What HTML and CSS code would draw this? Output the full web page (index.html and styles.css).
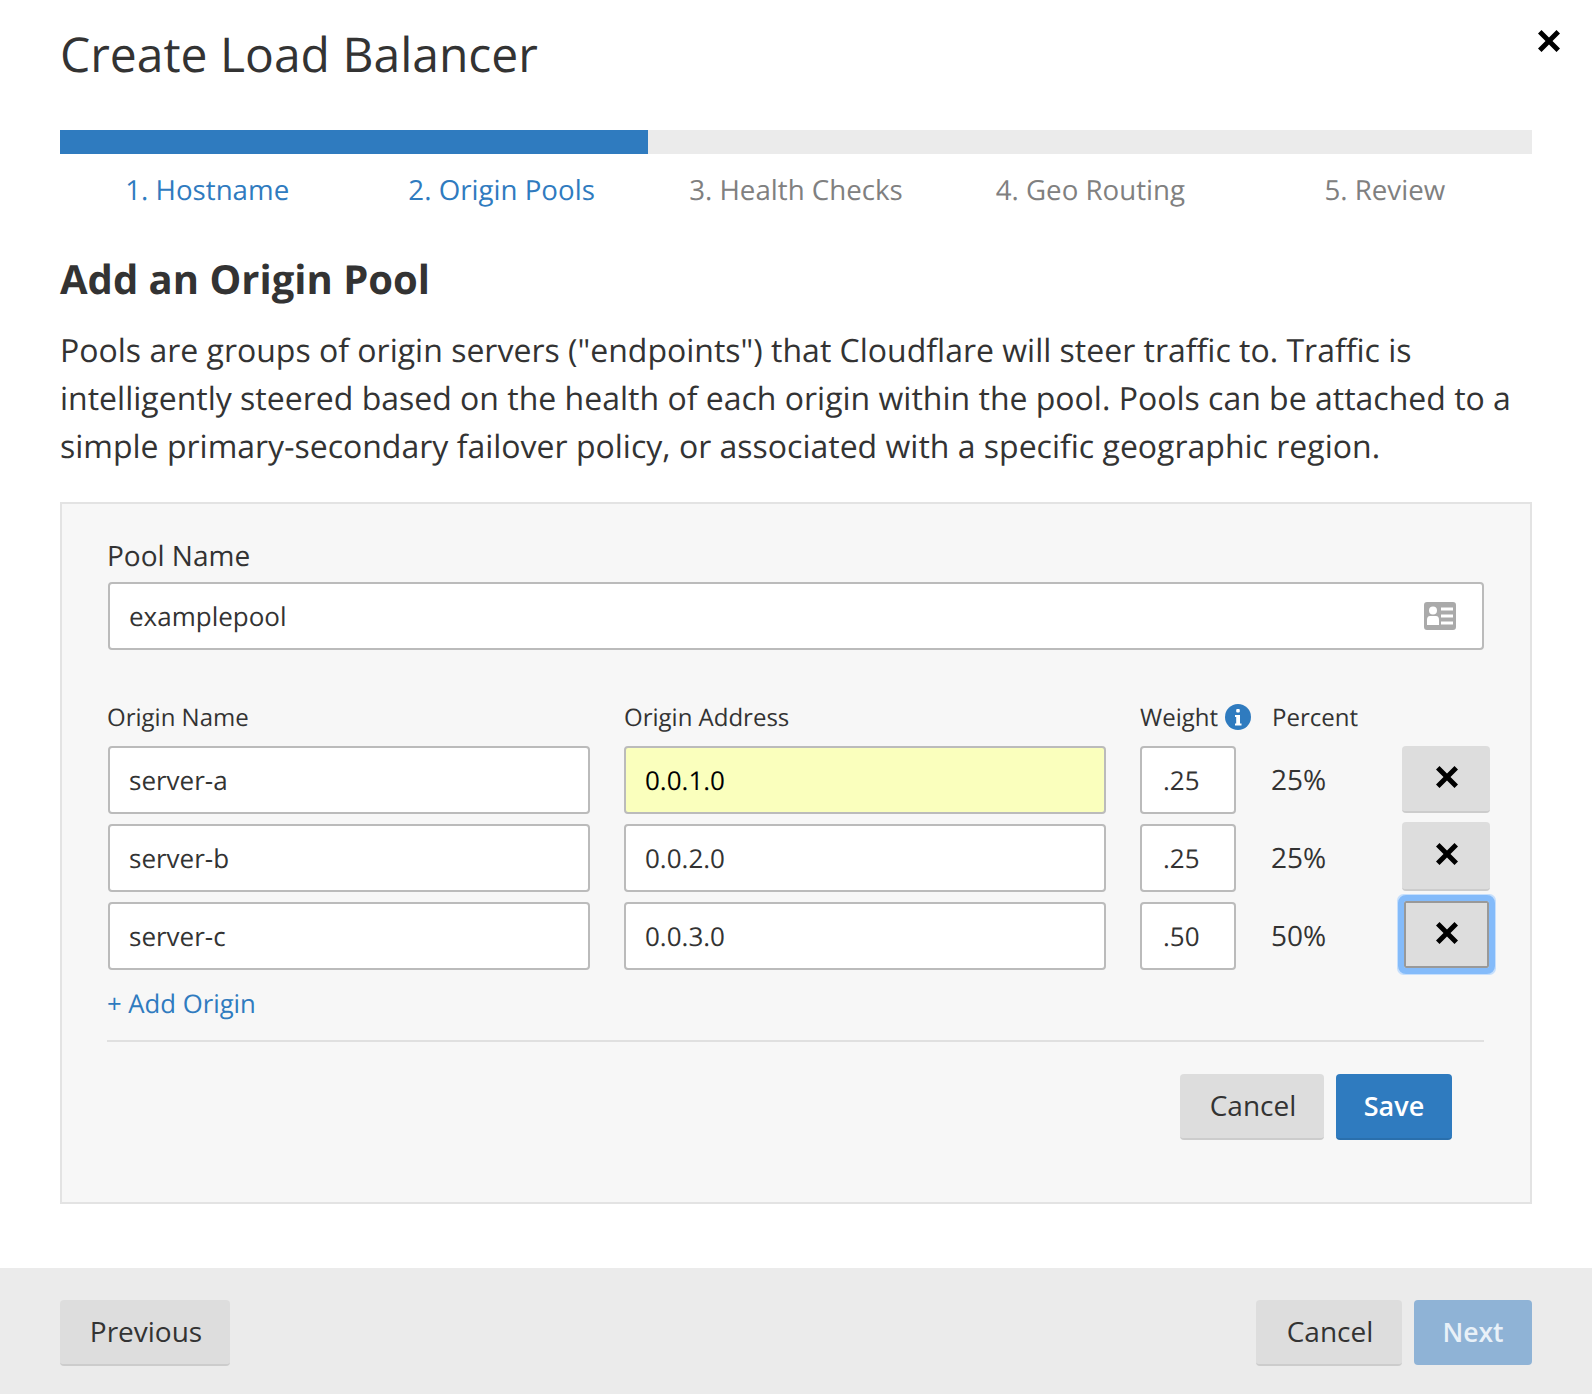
FILE: index.html
```html
<!DOCTYPE html>
<html lang="en">
  <head>
    <meta charset="UTF-8" />
    <title>Create Load Balancer</title>
    <link rel="stylesheet" href="styles.css">
  </head>
  <body>
    <div class="modal">
      <svg class="close-icon" viewBox="0 0 24 24"><path d="M4.5 1L12 8.5L19.5 1L23 4.5L15.5 12L23 19.5L19.5 23L12 15.5L4.5 23L1 19.5L8.5 12L1 4.5Z" /></svg>

      <main class="content">
        <h1>Create Load Balancer</h1>

        <div class="progress"><div class="progress-fill"></div></div>
        <ol class="steps">
          <li class="done">1. Hostname</li>
          <li class="done">2. Origin Pools</li>
          <li>3. Health Checks</li>
          <li>4. Geo Routing</li>
          <li>5. Review</li>
        </ol>

        <h2>Add an Origin Pool</h2>
        <p class="intro">Pools are groups of origin servers ("endpoints") that Cloudflare will steer traffic to. Traffic is intelligently steered based on the health of each origin within the pool. Pools can be attached to a simple primary-secondary failover policy, or associated with a specific geographic region.</p>

        <section class="pool-box">
          <div class="pool-label">Pool Name</div>
          <div class="field pool-field">
            <span>examplepool</span>
            <svg class="card-icon" viewBox="0 0 32 28">
              <path fill-rule="evenodd" d="M3 0H29A3 3 0 0 1 32 3V25A3 3 0 0 1 29 28H3A3 3 0 0 1 0 25V3A3 3 0 0 1 3 0ZM9 4.5A4 4 0 1 0 9 12.5A4 4 0 1 0 9 4.5ZM3 23H15V18Q15 14 12 14H6Q3 14 3 18ZM17 5.5V8.5H29V5.5ZM17 12.5V15.5H29V12.5ZM17 19.5V22.5H29V19.5Z" />
            </svg>
          </div>

          <div class="origin-grid origin-head">
            <div>Origin Name</div>
            <div>Origin Address</div>
            <div class="weight-head">Weight
              <svg class="info-icon" viewBox="0 0 26 26">
                <circle cx="13" cy="13" r="13" />
                <rect class="info-mark" x="11.2" y="5" width="3.6" height="3.6" rx="1" />
                <path class="info-mark" d="M10 11H15V19.5H16.5V21.5H10V19.5H11.2V13H10Z" />
              </svg>
            </div>
            <div class="percent">Percent</div>
            <div></div>
          </div>

          <div class="origin-grid origin-row">
            <div class="field">server-a</div>
            <div class="field autofilled">0.0.1.0</div>
            <div class="field weight-field">.25</div>
            <div class="percent">25%</div>
            <button class="btn remove" type="button"><svg class="x-icon" viewBox="0 0 24 24"><path d="M4.5 1L12 8.5L19.5 1L23 4.5L15.5 12L23 19.5L19.5 23L12 15.5L4.5 23L1 19.5L8.5 12L1 4.5Z" /></svg></button>
          </div>
          <div class="origin-grid origin-row">
            <div class="field">server-b</div>
            <div class="field">0.0.2.0</div>
            <div class="field weight-field">.25</div>
            <div class="percent">25%</div>
            <button class="btn remove tall" type="button"><svg class="x-icon" viewBox="0 0 24 24"><path d="M4.5 1L12 8.5L19.5 1L23 4.5L15.5 12L23 19.5L19.5 23L12 15.5L4.5 23L1 19.5L8.5 12L1 4.5Z" /></svg></button>
          </div>
          <div class="origin-grid origin-row">
            <div class="field">server-c</div>
            <div class="field">0.0.3.0</div>
            <div class="field weight-field">.50</div>
            <div class="percent">50%</div>
            <button class="btn remove focused" type="button"><svg class="x-icon" viewBox="0 0 24 24"><path d="M4.5 1L12 8.5L19.5 1L23 4.5L15.5 12L23 19.5L19.5 23L12 15.5L4.5 23L1 19.5L8.5 12L1 4.5Z" /></svg></button>
          </div>

          <a class="add-origin" href="#">+ Add Origin</a>

          <div class="pool-actions">
            <button class="btn cancel" type="button">Cancel</button>
            <button class="btn primary" type="button">Save</button>
          </div>
        </section>
      </main>

      <footer class="footer">
        <button class="btn previous" type="button">Previous</button>
        <div class="footer-right">
          <button class="btn cancel footer-cancel" type="button">Cancel</button>
          <button class="btn primary next" type="button">Next</button>
        </div>
      </footer>
    </div>
  </body>
</html>
```

FILE: styles.css
```css
*,
*::before,
*::after {
  margin: 0;
  padding: 0;
  box-sizing: border-box;
}

html,
body {
  width: 100%;
  background-color: #fff;
  font-family: "Open Sans", sans-serif;
  color: #333;
  text-rendering: geometricPrecision;
}

.modal {
  position: relative;
  width: 1592px;
  height: 1394px;
  overflow: hidden;
}

.close-icon {
  position: absolute;
  top: 29px;
  left: 1537px;
  width: 24px;
  height: 24px;
  fill: #000;
}

.content {
  padding: 0 60px;
}

h1 {
  height: 110px;
  margin-bottom: 20px;
  font-size: 48px;
  font-weight: 400;
  line-height: 110px;
}

.progress {
  height: 24px;
  background-color: #ebebeb;
}

.progress-fill {
  width: 588px;
  height: 100%;
  background-color: #2f7bbf;
}

.steps {
  display: grid;
  grid-template-columns: repeat(5, 1fr);
  height: 72px;
  list-style: none;
  font-size: 27.7px;
  line-height: 72px;
  text-align: center;
  color: #808080;
}

.steps .done {
  color: #2f7bbf;
}

h2 {
  margin-top: 28px;
  font-size: 40px;
  font-weight: 700;
  line-height: 50px;
}

.intro {
  margin-top: 23px;
  font-size: 32px;
  line-height: 48px;
}

.pool-box {
  height: 702px;
  margin-top: 31px;
  padding: 0 46px;
  border: 2px solid #e3e3e3;
  background-color: #f7f7f7;
}

.pool-label {
  margin-top: 32px;
  margin-left: -1px;
  font-size: 28px;
  line-height: 40px;
}

.field {
  display: flex;
  align-items: center;
  height: 68px;
  padding: 0 19px;
  border: 2px solid #bbb;
  border-radius: 4px;
  background-color: #fff;
  font-size: 26px;
  color: #333;
}

.pool-field {
  justify-content: space-between;
  margin-top: 6px;
  padding-right: 26px;
}

.weight-field {
  padding-left: 21px;
}

.card-icon {
  width: 32px;
  height: 28px;
  fill: #aaa;
}

.origin-grid {
  display: grid;
  grid-template-columns: 482px 482px 96px 98px 88px;
  column-gap: 34px;
}

.origin-head {
  margin-top: 50px;
  margin-bottom: 10px;
  font-size: 24px;
  line-height: 36px;
}

.origin-head > div:first-child {
  margin-left: -1px;
}

.weight-head {
  display: flex;
  align-items: center;
  gap: 7px;
  white-space: nowrap;
}

.info-icon {
  flex-shrink: 0;
  width: 26px;
  height: 26px;
  margin-top: -2px;
  fill: #2f7bbf;
}

.info-mark {
  fill: #fff;
}

.origin-row {
  height: 68px;
  margin-bottom: 10px;
}

.percent {
  padding-left: 1px;
  font-size: 28px;
  line-height: 69px;
  white-space: nowrap;
}

.origin-head .percent {
  padding-left: 2px;
  font-size: 24px;
  line-height: 36px;
}

.autofilled {
  background-color: #faffbd;
  color: #000;
}

.btn {
  padding: 0 0 2px 2px;
  border: none;
  border-bottom: 2px solid #ccc;
  border-radius: 4px;
  background-color: #ddd;
  font-family: inherit;
  font-size: 28px;
  color: #333;
  cursor: pointer;
}

.remove {
  display: flex;
  align-items: center;
  justify-content: center;
  height: 67px;
  padding-bottom: 4px;
}

.tall {
  height: 69px;
  margin-top: -2px;
}

.x-icon {
  width: 24px;
  height: 24px;
  fill: #000;
}

.focused {
  margin-top: -1px;
  margin-right: 1px;
  margin-left: 2px;
  padding-left: 0;
  border: 2px solid #999;
  border-radius: 2px;
  outline: 6px solid #84bbfa;
  box-shadow: 0 0 0 7px #c6dffc;
}

.add-origin {
  display: block;
  margin-top: 16px;
  margin-left: -1px;
  padding-bottom: 18px;
  border-bottom: 2px solid #e0e0e0;
  font-size: 25.7px;
  line-height: 36px;
  color: #2f7bbf;
  text-decoration: none;
}

.pool-actions {
  display: flex;
  justify-content: flex-end;
  gap: 12px;
  margin-top: 32px;
  padding-right: 32px;
}

.cancel {
  width: 144px;
  height: 66px;
}

.primary {
  padding-left: 0;
  border-bottom: 2px solid #2a6fac;
  background-color: #2f7bbf;
  font-size: 27px;
  font-weight: 600;
  color: #fff;
}

.pool-actions .primary {
  width: 116px;
  height: 66px;
}

.footer {
  display: flex;
  justify-content: space-between;
  height: 126px;
  margin-top: 64px;
  padding: 32px 60px 0;
  background-color: #ebebeb;
}

.footer-right {
  display: flex;
  gap: 12px;
}

.previous {
  width: 170px;
  height: 66px;
}

.footer-cancel {
  width: 146px;
}

.next {
  width: 118px;
  height: 65px;
  border-bottom: none;
  background-color: #8fb3d6;
  font-size: 26.5px;
  color: #e9f1f8;
}
```
